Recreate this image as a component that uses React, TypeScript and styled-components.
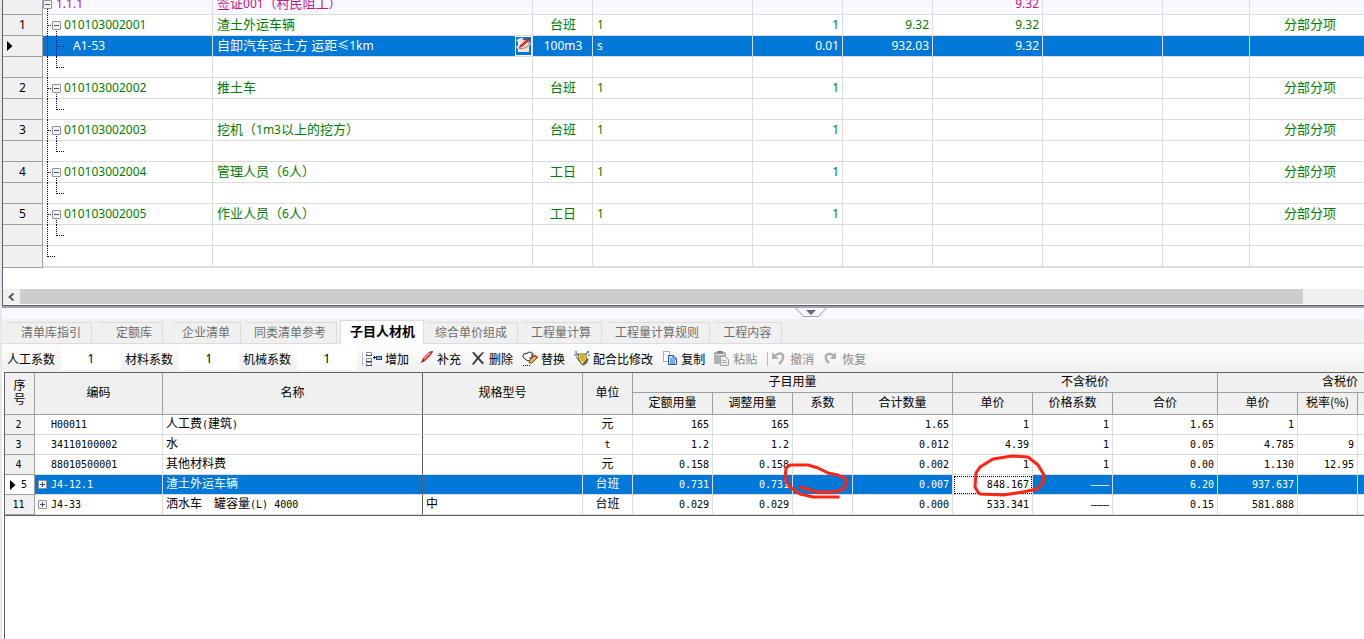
import React from "react";
import styled, { createGlobalStyle, css } from "styled-components";

const UI = '"Noto Sans", "Noto Sans CJK SC", sans-serif';
const SONG = '"Noto Sans CJK SC", sans-serif';
const MONO = '"DejaVu Sans Mono", "Noto Sans CJK SC", monospace';

const Global = createGlobalStyle`
  * { box-sizing: border-box; }
  html, body, #root { height: 100%; }
  body { margin: 0; background: #fff; color: #000; font-family: ${SONG}; font-size: 12px; overflow: hidden; }
  button, input { font: inherit; color: inherit; margin: 0; padding: 0; border: 0; background: none; border-radius: 0; }
`;

const Page = styled.div`
  display: flex;
  flex-direction: column;
  min-height: 100vh;
  border-left: 2px solid #e6e8ee;
`;

/* ---------- Bill of quantities grid ---------- */

const BillPane = styled.section`
  flex: none;
  border-left: 1px solid #606066;
  border-bottom: 1px solid #606066;
  overflow: hidden;
`;

/* The grid is scrolled down, so its first row is partly out of view. */
const BillScroll = styled.div`
  overflow: hidden;
  padding-bottom: 21px;
`;

const BillTable = styled.table`
  width: 100%;
  min-width: 1367px;
  margin-top: -6px;
  table-layout: fixed;
  border-collapse: separate;
  border-spacing: 0;
  font-family: ${UI};
  font-size: 12px;
  line-height: 20px;
`;

const BillRow = styled.tr<{ $kind: string }>`
  color: #007d00;
  background: #fff;
  ${(p) => p.$kind === "root" && css`color: #c71585; background: #f8f8ff;`}
  ${(p) => p.$kind === "leaf" && css`color: #fff; background: #0078d7;`}
  &:last-child td { border-bottom-width: 2px; }
`;

const BillCell = styled.td<{ $align?: string }>`
  height: 21px;
  padding: 0 3px 0 4px;
  border-right: 1px solid #dcdcdc;
  border-bottom: 1px solid #dcdcdc;
  text-align: ${(p) => p.$align || "left"};
  white-space: nowrap;
  overflow: hidden;
`;

const BillHead = styled.th`
  height: 21px;
  padding: 0;
  background: #f0f0f0;
  color: #000;
  border-right: 1px solid #a0a0a0;
  border-bottom: 1px solid #a0a0a0;
  font-weight: 400;
  svg { display: block; margin-left: 4px; }
`;

const TreeCell = styled(BillCell)`
  padding: 0;
  overflow: visible;
`;

const TreeLine = styled.div<{ $gap: number }>`
  display: flex;
  height: 20px;
  gap: ${(p) => p.$gap}px;
  svg { flex: none; margin-bottom: -1px; overflow: visible; }
`;

const NameLine = styled.div`
  display: flex;
  justify-content: space-between;
  align-items: center;
  height: 20px;
  margin-right: -3px;
`;

const EditButton = styled.button`
  width: 17px;
  height: 20px;
  border: 1px solid #fff;
  svg { display: block; }
`;

const Han = styled.span`
  font-family: ${SONG};
  font-size: 13px;
  line-height: 0;
`;

const HanSmall = styled(Han)`
  font-size: 12px;
`;

const ScrollTrack = styled.div`
  display: flex;
  height: 16px;
  background: #f0f0f0;
  border-bottom: 1px solid #fff;
`;

const ScrollArrow = styled.button`
  flex: none;
  width: 17px;
  svg { display: block; margin: 0 auto; }
`;

const ScrollThumb = styled.div`
  width: 94.3%;
  background: #cdcdcd;
`;

/* ---------- Splitter ---------- */

const Splitter = styled.div`
  flex: none;
  height: 13px;
  border-top: 2px solid #a0a0b8;
  background: #f8f8ff;
`;

const SplitButton = styled.button`
  display: block;
  margin-left: 58.2%;
  svg { display: block; }
`;

/* ---------- Detail tabs ---------- */

const TabBar = styled.div`
  flex: none;
  display: flex;
  align-items: flex-end;
  height: 25px;
  padding-left: 5px;
  background: #f0f0f0;
  box-shadow: inset 0 -1px #dcdcdc;
`;

const Tab = styled.button<{ $lead?: number; $after?: number }>`
  height: 22px;
  padding: 0 10px 2px ${(p) => p.$lead || 8}px;
  margin-right: ${(p) => p.$after || 5}px;
  border-top: 1px solid #dcdcdc;
  border-right: 1px solid #dcdcdc;
  border-bottom: 1px solid #dcdcdc;
  color: #6d6d6d;
  line-height: 18px;
  white-space: nowrap;
`;

const ActiveTab = styled(Tab)`
  height: 24px;
  padding: 0 8px 4px 9px;
  border: 1px solid #dcdcdc;
  border-bottom: 0;
  background: #fff;
  color: #000;
  font-size: 13px;
  font-weight: 700;
`;

/* ---------- Toolbar ---------- */

const Toolbar = styled.div`
  flex: none;
  display: flex;
  align-items: center;
  height: 28px;
  padding: 1px 0 0 5px;
  background: linear-gradient(#fdfdfd, #f0f0f0);
  white-space: nowrap;
`;

const Field = styled.label`
  display: flex;
  align-items: center;
  gap: 6px;
  margin-right: 4px;
`;

const FactorInput = styled.input`
  width: 60px;
  height: 23px;
  background: #fff;
  font-family: ${UI};
  text-align: center;
`;

const Divider = styled.span`
  width: 1px;
  height: 14px;
  margin: 0 3px 0 1px;
  background: #bdbdbd;
`;

const Tool = styled.button`
  display: flex;
  align-items: center;
  gap: 3px;
  margin-right: 9px;
  &:disabled { color: #8a8a8a; }
  svg { flex: none; }
`;

/* ---------- Resource grid ---------- */

const DetailPane = styled.section`
  position: relative;
  flex: 1;
  margin-left: 2px;
  border-top: 1px solid #606066;
  border-left: 1px solid #606066;
  overflow: hidden;
`;

const DetailTable = styled.table`
  width: 100%;
  min-width: 1458px;
  table-layout: fixed;
  border-collapse: separate;
  border-spacing: 0;
  border-bottom: 1px solid #606066;
  font-size: 12px;
`;

const headCell = css`
  padding: 0;
  background: #f0f0f0;
  color: #000;
  border-right: 1px solid #a0a0a0;
  border-bottom: 1px solid #a0a0a0;
  font-weight: 400;
  text-align: center;
`;

const Head = styled.th<{ $frozen?: boolean; $low?: boolean }>`
  ${headCell}
  padding-bottom: 3px;
  height: ${(p) => (p.$low ? 22 : 20)}px;
  line-height: 14px;
  ${(p) => p.$frozen && css`border-right-color: #606066;`}
`;

const Index = styled.th<{ $current?: boolean }>`
  ${headCell}
  height: 20px;
  font-family: ${MONO};
  font-size: 10px;
  ${(p) => p.$current && css`background: #fff;`}
`;

const IndexLine = styled.div`
  display: flex;
  align-items: center;
  justify-content: center;
  gap: 5px;
  padding-right: 2px;
`;

const Row = styled.tr<{ $current?: boolean }>`
  color: ${(p) => (p.$current ? "#fff" : "#000")};
  background: ${(p) => (p.$current ? "#0078d7" : "#fff")};
`;

const Cell = styled.td<{ $align?: string; $frozen?: boolean; $focus?: boolean }>`
  height: 20px;
  padding: 0 3px;
  border-right: 1px solid #dcdcdc;
  border-bottom: 1px solid #dcdcdc;
  font-family: ${MONO};
  font-size: 10px;
  line-height: 19px;
  text-align: ${(p) => p.$align || "left"};
  white-space: pre;
  overflow: hidden;
  ${(p) => p.$frozen && css`border-right-color: #606066;`}
  ${(p) => p.$focus && css`
    background: #fff;
    color: #000;
    outline: 1px dotted #000;
    outline-offset: -2px;
  `}
`;

const CodeLine = styled.div`
  display: flex;
  align-items: center;
  height: 19px;
`;

const Expander = styled.span`
  flex: none;
  width: 13px;
  height: 9px;
  button, svg { display: block; }
`;

const Markup = styled.svg`
  position: absolute;
  left: 775px;
  top: 78px;
  pointer-events: none;
`;

/* ---------- Drawings ---------- */

const CurrentArrow = () => (
  <svg width="6" height="10" viewBox="0 0 6 10" aria-hidden="true">
    <path d="M0 0L5.5 5L0 10Z" fill="currentColor" />
  </svg>
);

const ToggleBox = ({ x, y, plus }: { x: number; y: number; plus?: boolean }) => (
  <g>
    <rect x={x + 0.5} y={y + 0.5} width="8" height="8" rx="0.5" fill="#f4f4f4" stroke="#919191" />
    <path d={`M${x + 2} ${y + 4.5}h5`} stroke="#3553a4" />
    {plus && <path d={`M${x + 4.5} ${y + 2}v5`} stroke="#3553a4" />}
  </g>
);

const Tree = ({ kind }: { kind: string }) => {
  const lines: Record<string, string> = {
    root: "M4.5 15V21",
    node: "M4.5 0V21M5 10.5H9M13.5 16V21",
    leaf: "M4.5 0V21M13.5 0V21M14 10.5H21",
    end: "M4.5 0V21M13.5 0V11M14 10.5H22",
    last: "M4.5 0V11M5 10.5H13",
  };
  return (
    <svg width={kind === "root" ? 11 : 19} height="21" aria-hidden="true">
      <path d={lines[kind]} stroke="#00007c" strokeDasharray="1 1" fill="none" />
      {kind === "root" && <ToggleBox x={0} y={6} />}
      {kind === "node" && <ToggleBox x={9} y={6} />}
    </svg>
  );
};

const PenGlyph = () => (
  <svg width="15" height="18" viewBox="0 0 15 18" aria-hidden="true">
    <rect width="15" height="18" fill="#0078d7" />
    <rect x="2" y="3" width="11" height="12" fill="#ece9e6" />
    <path d="M1 4Q4 1 7 2M2 9Q0 12 6 12Q12 11 14 6" stroke="#f6d9c8" strokeWidth="2" fill="none" />
    <path d="M2 11Q6 13 11 10Q14 7 13 4" stroke="#b87858" fill="none" />
    <path d="M3 11L4 8L10 2L13 4L6 10Z" fill="#d6262a" />
    <path d="M10 2L12 0L15 1L13 4Z" fill="#555" />
    <path d="M5 8L10 3" stroke="#ff9a94" />
  </svg>
);

const icons: Record<string, React.ReactNode> = {
  add: (
    <>
      <path d="M0.5 1.5h5v3h-5zM0.5 7.5h5v3h-5zM0.5 11.5h5v3h-5z" fill="#fff" stroke="#7f90a6" />
      <path d="M0 4.5h6M0 10.5h6M0 14.5h6" stroke="#34465e" />
      <path d="M7 6.500h3M8.500 5v3" stroke="#111" />
      <rect x="10.500" y="5.500" width="5" height="3" fill="#7eb0ee" stroke="#23447c" />
    </>
  ),
  pen: (
    <>
      <path d="M3 12L5 7L11 1L15 0L13 4L7 10Z" fill="#d92a26" />
      <path d="M6 8L12 2" stroke="#ff9d92" strokeWidth="1.500" />
      <path d="M12 0.500L15.500 -0.500L13.500 3.500Z" fill="#666" />
      <path d="M3 12L5 8L6.500 9.500Z" fill="#7b2f27" />
    </>
  ),
  del: (
    <path d="M2 1.500L4 1L8 5.500L12.500 1L14 1.500L9.300 7L14 12L12.500 13.500L8 8.500L3.500 14L2 13L6.700 7Z" fill="#3c3c3c" />
  ),
  swap: (
    <>
      <path d="M1 6Q1 2 5 2.500Q7 0 10 2Q12 3 10 6" fill="#fff" stroke="#555" strokeWidth="1.300" />
      <path d="M1 6L4 9L8 10M10 3V7H7" stroke="#333" fill="none" />
      <path d="M7 12L8 9L13 4L15.500 6.500L10 12Z" fill="#e7b64a" stroke="#6d4d1c" />
      <path d="M12 5L13.500 3.500L16 6L14.500 7.500Z" fill="#c34a45" />
      <path d="M1 14.500H8" stroke="#111" strokeDasharray="1 1" />
    </>
  ),
  mix: (
    <>
      <path d="M4 3H12L13 12L8 14L5 9Z" fill="#f2dc58" stroke="#87742a" />
      <path d="M6 5h5M6 7h5M7 9h4" stroke="#a58a27" />
      <path d="M9 14L14 8" stroke="#5d5d5d" strokeWidth="2" />
      <path d="M1 1h2M0 4h2M3 2v3M13 1h2M15 3v2M12 3l3-3" stroke="#2547a4" />
      <path d="M2 6L7 12" stroke="#444" />
    </>
  ),
  copy: (
    <>
      <path d="M1.500 0.500H7.500V10.500H1.500Z" fill="#fff" stroke="#53678d" strokeDasharray="1 1" />
      <path d="M6.500 4.500H11L14.500 7.500V13.500H6.500Z" fill="#d4e5ff" stroke="#2456b4" />
      <path d="M11 4V8H14M8 8h2M8 10h5M8 12h5" stroke="#2d68cc" fill="none" />
    </>
  ),
  paste: (
    <>
      <rect x="0" y="1" width="12" height="12" rx="1" fill="#b2b2b2" />
      <path d="M3 3V0H9V3Z" fill="#888" />
      <path d="M2 3.5H10" stroke="#eee" />
      <path d="M6.500 5.500H11L14.500 8.500V14.500H6.500Z" fill="#eee" stroke="#a0a0a0" />
      <path d="M8 9.500h4M8 11.500h5" stroke="#aaa" />
    </>
  ),
  undo: (
    <>
      <path d="M4 5Q8 1 11.500 3.500Q13.500 8 8 13" stroke="#b0b0b0" strokeWidth="2.500" fill="none" />
      <path d="M1 1V8H8Z" fill="#b0b0b0" />
    </>
  ),
  redo: (
    <>
      <path d="M11 5Q7 1 3.500 4Q1.500 8 6 12" stroke="#b0b0b0" strokeWidth="2.500" fill="none" />
      <path d="M13 1V8H7Z" fill="#b0b0b0" />
    </>
  ),
};

const ToolIcon = ({ name }: { name: string }) => (
  <svg width="16" height="16" viewBox="0 0 16 16" fill="none" aria-hidden="true">
    {icons[name]}
  </svg>
);

/* Chinese runs are set one step larger than the Latin ones beside them. */
const Mixed = ({ text, small }: { text: string; small?: boolean }) => {
  const Run = small ? HanSmall : Han;
  return (
    <span>
      {text.split(/([\u3000-\u9fff\uff00-\uffef]+)/).map((part, i) =>
        i % 2 ? <Run key={i}>{part}</Run> : part
      )}
    </span>
  );
};

/* ---------- Data ---------- */

type Bill = { kind: string; no?: string; code?: string; cells?: string[] };

const bills: Bill[] = [
  { kind: "root", code: "1.1.1", cells: ["签证001（村民阻工）", "", "", "", "", "9.32", "", "", ""] },
  { kind: "node", no: "1", code: "010103002001", cells: ["渣土外运车辆", "台班", "1", "1", "9.32", "9.32", "", "", "分部分项"] },
  { kind: "leaf", code: "A1-53", cells: ["自卸汽车运土方 运距≤1km", "100m3", "s", "0.01", "932.03", "9.32", "", "", ""] },
  { kind: "end" },
  { kind: "node", no: "2", code: "010103002002", cells: ["推土车", "台班", "1", "1", "", "", "", "", "分部分项"] },
  { kind: "end" },
  { kind: "node", no: "3", code: "010103002003", cells: ["挖机（1m3以上的挖方）", "台班", "1", "1", "", "", "", "", "分部分项"] },
  { kind: "end" },
  { kind: "node", no: "4", code: "010103002004", cells: ["管理人员（6人）", "工日", "1", "1", "", "", "", "", "分部分项"] },
  { kind: "end" },
  { kind: "node", no: "5", code: "010103002005", cells: ["作业人员（6人）", "工日", "1", "1", "", "", "", "", "分部分项"] },
  { kind: "end" },
  { kind: "last" },
];

const billCols = [40, 170, 320, 60, 160, 90, 90, 110, 120, 87];
const billAlign = ["left", "center", "left", "right", "right", "right", "left", "left", "center"];
const noCells = ["", "", "", "", "", "", "", "", ""];

const detailCols = [30, 128, 260, 160, 50, 80, 80, 60, 100, 80, 80, 105, 80, 60];
const DASH = "———";

const resources = [
  { no: "2", code: "H00011", name: "人工费(建筑)", spec: "", unit: "元", v: ["165", "165", "", "1.65", "1", "1", "1.65", "1", "", ""] },
  { no: "3", code: "34110100002", name: "水", spec: "", unit: "t", v: ["1.2", "1.2", "", "0.012", "4.39", "1", "0.05", "4.785", "9", ""] },
  { no: "4", code: "88010500001", name: "其他材料费", spec: "", unit: "元", v: ["0.158", "0.158", "", "0.002", "1", "1", "0.00", "1.130", "12.95", ""] },
  { no: "5", code: "J4-12.1", name: "渣土外运车辆", spec: "", unit: "台班", v: ["0.731", "0.731", "", "0.007", "848.167", DASH, "6.20", "937.637", "", ""], open: true, current: true },
  { no: "11", code: "J4-33", name: "洒水车  罐容量(L) 4000", spec: "中", unit: "台班", v: ["0.029", "0.029", "", "0.000", "533.341", DASH, "0.15", "581.888", "", ""], open: true },
];

const subHeads = ["定额用量", "调整用量", "系数", "合计数量", "单价", "价格系数", "合价", "单价", "税率(%)", ""];

export default function App() {
  return (
    <Page>
      <Global />
      <BillPane>
        <BillScroll>
          <BillTable>
            <colgroup>
              {billCols.map((w, i) => <col key={i} width={w} />)}
              <col />
            </colgroup>
            <tbody>
              {bills.map((b, i) => (
                <BillRow key={i} $kind={b.kind}>
                  <BillHead scope="row">{b.kind === "leaf" ? <CurrentArrow /> : b.no}</BillHead>
                  <TreeCell>
                    <TreeLine $gap={b.kind === "leaf" ? 11 : 2}>
                      <Tree kind={b.kind} />
                      {b.code}
                    </TreeLine>
                  </TreeCell>
                  {(b.cells || noCells).map((c, j) => (
                    <BillCell key={j} $align={billAlign[j]}>
                      {j === 0 && b.kind === "leaf" ? (
                        <NameLine>
                          <Mixed text={c} />
                          <EditButton aria-label="编辑"><PenGlyph /></EditButton>
                        </NameLine>
                      ) : (
                        <Mixed text={c} />
                      )}
                    </BillCell>
                  ))}
                </BillRow>
              ))}
            </tbody>
          </BillTable>
        </BillScroll>
        <ScrollTrack>
          <ScrollArrow aria-label="向左滚动">
            <svg width="7" height="8" viewBox="0 0 7 8">
              <path d="M5.500 0.500L1.500 4L5.500 7.500" stroke="#505050" strokeWidth="1.800" fill="none" />
            </svg>
          </ScrollArrow>
          <ScrollThumb />
        </ScrollTrack>
      </BillPane>

      <Splitter>
        <SplitButton aria-label="折叠">
          <svg width="32" height="9" viewBox="0 0 32 9">
            <path d="M0.500 0L8.500 8.500H23.500L31.500 0" fill="#f8f8ff" stroke="#9a9ab0" />
            <path d="M11 2H21L16 7Z" fill="#63637c" />
          </svg>
        </SplitButton>
      </Splitter>

      <TabBar role="tablist">
        <Tab role="tab" $lead={14}>清单库指引</Tab>
        <Tab role="tab" $lead={19} $after={11}>定额库</Tab>
        <Tab role="tab">企业清单</Tab>
        <Tab role="tab" $after={3}>同类清单参考</Tab>
        <ActiveTab role="tab" aria-selected="true" $after={3}>子目人材机</ActiveTab>
        <Tab role="tab">综合单价组成</Tab>
        <Tab role="tab">工程量计算</Tab>
        <Tab role="tab">工程量计算规则</Tab>
        <Tab role="tab">工程内容</Tab>
      </TabBar>

      <Toolbar>
        {["人工系数", "材料系数", "机械系数"].map((t) => (
          <Field key={t}>{t}<FactorInput defaultValue="1" /></Field>
        ))}
        <Divider />
        <Tool><ToolIcon name="add" />增加</Tool>
        <Tool><ToolIcon name="pen" />补充</Tool>
        <Tool><ToolIcon name="del" />删除</Tool>
        <Tool><ToolIcon name="swap" />替换</Tool>
        <Tool><ToolIcon name="mix" />配合比修改</Tool>
        <Tool><ToolIcon name="copy" />复制</Tool>
        <Tool disabled><ToolIcon name="paste" />粘贴</Tool>
        <Divider />
        <Tool disabled><ToolIcon name="undo" />撤消</Tool>
        <Tool disabled><ToolIcon name="redo" />恢复</Tool>
      </Toolbar>

      <DetailPane>
        <DetailTable>
          <colgroup>
            {detailCols.map((w, i) => <col key={i} width={w} />)}
            <col />
          </colgroup>
          <thead>
            <tr>
              <Head rowSpan={2}>序<br />号</Head>
              <Head rowSpan={2}>编码</Head>
              <Head rowSpan={2} $frozen>名称</Head>
              <Head rowSpan={2}>规格型号</Head>
              <Head rowSpan={2}>单位</Head>
              <Head colSpan={4}>子目用量</Head>
              <Head colSpan={3}>不含税价</Head>
              <Head colSpan={3}>含税价</Head>
            </tr>
            <tr>
              {subHeads.map((h, i) => <Head key={i} $low>{h}</Head>)}
            </tr>
          </thead>
          <tbody>
            {resources.map((r) => (
              <Row key={r.no} $current={r.current}>
                <Index scope="row" $current={r.current}>
                  <IndexLine>{r.current && <CurrentArrow />}{r.no}</IndexLine>
                </Index>
                <Cell>
                  <CodeLine>
                    <Expander>
                      {r.open && (
                        <button aria-label="展开">
                          <svg width="9" height="9"><ToggleBox x={0} y={0} plus /></svg>
                        </button>
                      )}
                    </Expander>
                    {r.code}
                  </CodeLine>
                </Cell>
                <Cell $frozen><Mixed text={r.name} small /></Cell>
                <Cell><Mixed text={r.spec} small /></Cell>
                <Cell $align="center"><Mixed text={r.unit} small /></Cell>
                {r.v.map((v, j) => (
                  <Cell key={j} $align="right" $focus={r.current && j === 4}>{v}</Cell>
                ))}
              </Row>
            ))}
          </tbody>
        </DetailTable>
        <Markup width="270" height="50" viewBox="780 451 270 50" fill="none" stroke="#ff2414" strokeWidth="3" strokeLinecap="square" strokeLinejoin="round" aria-hidden="true">
          <path d="M838 497H813L800 494L790 487L785 479L786 468L790 465H808L818 468L828 473L838 475L846 479V485L842 490L833 492H817L807 489L801 487" />
          <path d="M978 492L975 487L976 473L980 467L993 459L1012 456L1028 457L1038 465L1044 475L1043 483L1037 489L1023 492L1003 495L980 494Z" />
        </Markup>
      </DetailPane>
    </Page>
  );
}
